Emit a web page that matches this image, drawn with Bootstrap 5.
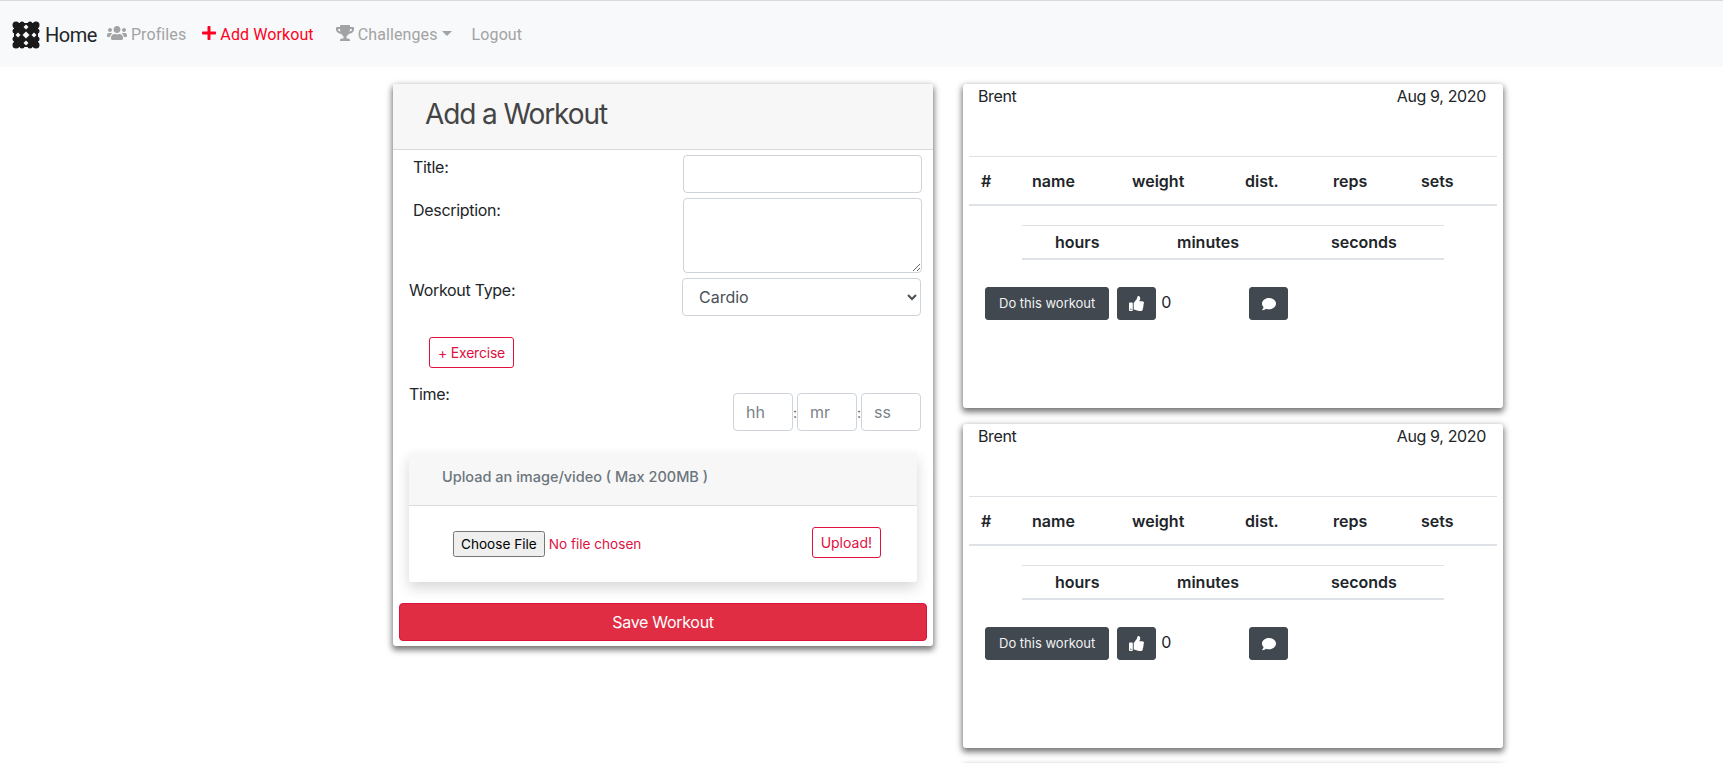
<!DOCTYPE html>
<html lang="en">
<head>
    <meta charset="UTF-8">
    <meta name="viewport" content="width=device-width, initial-scale=1.0">
    <title>Add a Workout</title>
    <link href="https://cdn.jsdelivr.net/npm/bootstrap@5.3.0/dist/css/bootstrap.min.css" rel="stylesheet">
    <style>
        html, body {
            height: 100%;
            overflow: hidden;
        }
        body {
            font-family: "Inter", "Roboto", sans-serif;
            font-size: 16px;
            color: #212529;
        }
        .top-bar {
            border-top: 1px solid #d8dadc;
            height: 67px;
            padding: 1px 0 0 12px;
            font-family: "Roboto", sans-serif;
            letter-spacing: .1px;
        }
        .top-bar .navbar-brand {
            font-size: 20px;
            padding: 0;
            margin-right: 0;
            gap: 5px;
            color: #212529;
            letter-spacing: -.5px;
        }
        .top-bar .nav-link {
            color: #a2a3a4;
        }
        .top-bar .nav-link svg {
            fill: currentColor;
            vertical-align: -1px;
        }
        .top-bar .nav-link.add-link {
            color: #ff0022;
        }
        .top-bar .dropdown-toggle::after {
            border-top-width: .34em;
            border-left-width: .34em;
            border-right-width: .34em;
            vertical-align: .2em;
        }
        .top-items {
            margin-left: 2px;
        }
        .item-add {
            margin-right: 6px;
        }
        .item-drop {
            margin-right: 4px;
        }
        .page-cols {
            padding-left: 393px;
            padding-top: 17px;
            gap: 30px;
        }
        .panel-box {
            width: 540px;
            background: #fff;
            box-shadow: 0 3px 6px 1px rgba(0, 0, 0, .55);
            border-radius: 3px;
        }
        .add-head {
            height: 66px;
            background: #f7f7f7;
            border-bottom: 1px solid #d9d9d9;
            padding: 0 0 4px 32px;
            display: flex;
            align-items: center;
        }
        .add-head h3 {
            font-size: 28px;
            font-weight: 400;
            color: #444;
            margin: 0;
            letter-spacing: -1.1px;
        }
        .add-body {
            padding: 5px 6px 5px;
        }
        .form-line {
            display: flex;
            justify-content: space-between;
            margin-bottom: 5px;
        }
        .form-line label {
            padding-left: 14px;
            letter-spacing: -.3px;
        }
        .form-line .form-control, .form-line .form-select {
            width: 239px;
            margin-right: 5px;
            border-color: #ced4da;
            border-radius: 4px;
        }
        .form-line .form-control::placeholder {
            color: #7b8289;
        }
        .form-line.shifted label {
            padding-left: 10px;
        }
        .form-line textarea.form-control {
            height: 75px;
        }
        .form-line .form-select {
            height: 38px;
            margin-right: 6px;
            padding-left: 12px;
            color: #495057;
            background-image: none;
            appearance: auto;
        }
        .ex-btn {
            margin: 16px 0 14px 30px;
            height: 31px;
            padding: 3px 8px;
            font-size: 14px;
            letter-spacing: -.2px;
            color: #e0103f;
            border-color: #e0103f;
            border-radius: 3px;
        }
        .time-boxes {
            display: flex;
            align-items: center;
            margin: 11px 6px 0 0;
            color: #555;
        }
        .form-line .time-boxes .form-control {
            width: 60px;
            margin: 0;
            padding-left: 12px;
        }
        .time-sep {
            width: 4px;
            text-align: center;
            font-size: 14px;
        }
        .upload-box {
            margin: 22px 10px 21px 10px;
            border-radius: 3px;
            box-shadow: 0 6px 14px rgba(0, 0, 0, .16);
        }
        .upload-head {
            height: 53px;
            background: #f7f7f7;
            border-bottom: 1px solid #dcdcdc;
            padding: 0 0 5px 33px;
            display: flex;
            align-items: center;
            color: #6c757d;
            font-size: 14.5px;
            font-weight: 500;
        }
        .upload-main {
            height: 76px;
            padding: 21px 36px 0 44px;
            display: flex;
            justify-content: space-between;
            align-items: flex-start;
        }
        .file-pick {
            margin-top: 4px;
            font-family: "Inter", sans-serif;
            font-size: 13.6px;
            color: #e0103f;
            width: 200px;
        }
        .up-btn {
            height: 31px;
            padding: 3px 8px;
            font-size: 14px;
            color: #e0103f;
            border-color: #e0103f;
            border-radius: 3px;
        }
        .save-btn {
            height: 38px;
            font-size: 16px;
            letter-spacing: -.3px;
            background: #e02d43;
            border-color: #dc143c;
            border-radius: 4px;
        }
        .feed-col {
            display: flex;
            flex-direction: column;
            gap: 16px;
        }
        .post-box {
            height: 324px;
            padding: 0 6px;
            flex: none;
        }
        .post-top {
            display: flex;
            justify-content: space-between;
            padding: 0 11px 0 9px;
            height: 72px;
            letter-spacing: -.35px;
        }
        .post-table {
            table-layout: fixed;
            margin-bottom: 0;
            font-size: 16px;
        }
        .post-table th {
            padding: 12px 12px 11px;
            border-top: 1px solid #dee2e6;
            border-bottom: 2px solid #dee2e6;
            font-weight: 600;
        }
        .post-table th:nth-child(1) { width: 51px; }
        .post-table th:nth-child(2) { width: 100px; }
        .post-table th:nth-child(3) { width: 113px; }
        .time-table {
            width: 422px;
            margin: 19px 0 0 53px;
            table-layout: fixed;
            font-size: 16px;
        }
        .time-table th {
            padding: 4px 12px;
            border-top: 1px solid #dee2e6;
            border-bottom: 2px solid #dee2e6;
            font-weight: 600;
        }
        .time-table th:nth-child(1) { width: 143px; padding-left: 33px; }
        .time-table th:nth-child(2) { width: 154px; }
        .post-actions {
            display: flex;
            align-items: center;
            margin: 27px 0 0 16px;
            font-size: 16px;
        }
        .post-actions .btn {
            height: 33px;
            font-size: 13px;
            padding: 0 13px;
            background: #41484f;
            border-color: #41484f;
            border-radius: 3px;
            color: #f1f2f3;
            display: flex;
            align-items: center;
            justify-content: center;
        }
        .post-actions svg {
            fill: #fff;
            flex: none;
        }
        .post-actions .act-icon {
            width: 39px;
            padding: 0;
        }
        .post-actions .act-like {
            margin-left: 8px;
        }
        .like-num {
            width: 93px;
            padding-left: 5px;
            margin-top: -4px;
        }
    </style>
</head>
<body>
    <nav class="navbar navbar-expand navbar-light bg-light top-bar">
        <a class="navbar-brand d-flex align-items-center" href="#">
            <svg width="28" height="28" viewBox="0 0 28 28">
                <g fill="#1a1a1a">
                    <rect x="2" y="2" width="24" height="24" rx="3"/>
                    <circle cx="4" cy="4" r="3.500"/><circle cx="10" cy="3" r="2.500"/><circle cx="18" cy="3" r="2.500"/><circle cx="24" cy="4" r="3.500"/>
                    <circle cx="3" cy="10" r="2.500"/><circle cx="25" cy="10" r="2.500"/>
                    <circle cx="3" cy="18" r="2.500"/><circle cx="25" cy="18" r="2.500"/>
                    <circle cx="4" cy="24" r="3.500"/><circle cx="10" cy="25" r="2.500"/><circle cx="18" cy="25" r="2.500"/><circle cx="24" cy="24" r="3.500"/>
                </g>
                <g fill="#f8f9fa">
                    <path d="M14 10.500l3.500 3.500-3.500 3.500-3.500-3.500z"/>
                    <path d="M14 3.500l2.500 2.500-2.500 2.500-2.500-2.500z"/>
                    <path d="M14 19.500l2.500 2.500-2.500 2.500-2.500-2.500z"/>
                    <path d="M3.500 14l2.500-2.500 2.500 2.500-2.500 2.500z"/>
                    <path d="M19.500 14l2.500-2.500 2.500 2.500-2.500 2.500z"/>
                </g>
            </svg>
            Home
        </a>
        <ul class="navbar-nav top-items align-items-center">
            <li class="nav-item">
                <a class="nav-link" href="#">
                    <svg width="20" height="16" viewBox="0 0 640 512"><path d="M96 224c35.300 0 64-28.700 64-64s-28.700-64-64-64-64 28.700-64 64 28.700 64 64 64zm448 0c35.300 0 64-28.700 64-64s-28.700-64-64-64-64 28.700-64 64 28.700 64 64 64zm32 32h-64c-17.600 0-33.500 7.100-45.100 18.600 40.300 22.100 68.900 62 75.100 109.400h66c17.700 0 32-14.300 32-32v-32c0-35.300-28.700-64-64-64zm-256 0c61.900 0 112-50.100 112-112S381.900 32 320 32 208 82.100 208 144s50.100 112 112 112zm76.800 32h-8.300c-20.800 10-43.900 16-68.500 16s-47.600-6-68.500-16h-8.300C179.600 288 128 339.600 128 403.200V432c0 26.500 21.500 48 48 48h288c26.500 0 48-21.500 48-48v-28.800c0-63.600-51.600-115.200-115.200-115.200zm-223.700-13.400C161.500 263.100 145.600 256 128 256H64c-35.300 0-64 28.700-64 64v32c0 17.700 14.300 32 32 32h65.900c6.300-47.400 34.900-87.300 75.200-109.400z"/></svg>
                    Profiles
                </a>
            </li>
            <li class="nav-item item-add">
                <a class="nav-link add-link" href="#">
                    <svg width="14" height="16" viewBox="0 0 448 512"><path d="M416 208H272V64c0-17.670-14.330-32-32-32h-32c-17.670 0-32 14.330-32 32v144H32c-17.670 0-32 14.330-32 32v32c0 17.670 14.330 32 32 32h144v144c0 17.670 14.330 32 32 32h32c17.670 0 32-14.330 32-32V304h144c17.670 0 32-14.330 32-32v-32c0-17.670-14.330-32-32-32z"/></svg>
                    Add Workout
                </a>
            </li>
            <li class="nav-item dropdown item-drop">
                <a class="nav-link dropdown-toggle" href="#" role="button" data-bs-toggle="dropdown" aria-expanded="false">
                    <svg width="18" height="16" viewBox="0 0 576 512"><path d="M552 64H448V24c0-13.300-10.700-24-24-24H152c-13.300 0-24 10.700-24 24v40H24C10.700 64 0 74.700 0 88v56c0 35.700 22.500 72.400 61.900 100.700 31.500 22.700 69.800 37.100 110 41.700C203.300 338.500 240 360 240 360v72h-48c-35.300 0-64 20.700-64 56v12c0 6.600 5.400 12 12 12h296c6.600 0 12-5.400 12-12v-12c0-35.300-28.700-56-64-56h-48v-72s36.700-21.500 68.100-73.600c40.300-4.600 78.600-19 110-41.700 39.300-28.300 61.900-65 61.900-100.700V88c0-13.300-10.700-24-24-24zM99.300 192.800C74.900 175.200 64 155.600 64 144v-16h64.200c1 32.600 5.800 61.200 12.800 86.200-15.100-5.200-29.200-12.400-41.700-21.400zM512 144c0 16.100-17.700 36.100-35.300 48.800-12.500 9-26.700 16.200-41.800 21.400 7-25 11.800-53.600 12.800-86.200H512v16z"/></svg>
                    Challenges</a>
            </li>
            <li class="nav-item">
                <a class="nav-link" href="#">Logout</a>
            </li>
        </ul>
    </nav>

    <div class="d-flex align-items-start page-cols">
        <!-- Add workout form -->
        <div class="panel-box">
            <div class="add-head"><h3>Add a Workout</h3></div>
            <form class="add-body">
                <div class="form-line">
                    <label for="workoutTitle">Title:</label>
                    <input type="text" class="form-control" id="workoutTitle">
                </div>
                <div class="form-line">
                    <label for="workoutDesc">Description:</label>
                    <textarea class="form-control" id="workoutDesc"></textarea>
                </div>
                <div class="form-line shifted">
                    <label for="workoutType">Workout Type:</label>
                    <select class="form-select" id="workoutType">
                        <option>Cardio</option>
                        <option>Strength</option>
                    </select>
                </div>
                <button type="button" class="btn btn-outline-danger ex-btn">+ Exercise</button>
                <div class="form-line shifted mb-0">
                    <label>Time:</label>
                    <div class="time-boxes">
                        <input type="text" class="form-control" placeholder="hh">
                        <span class="time-sep">:</span>
                        <input type="text" class="form-control" placeholder="mr">
                        <span class="time-sep">:</span>
                        <input type="text" class="form-control" placeholder="ss">
                    </div>
                </div>
                <div class="upload-box">
                    <div class="upload-head">Upload an image/video ( Max 200MB )</div>
                    <div class="upload-main">
                        <input type="file" class="file-pick">
                        <button type="button" class="btn btn-outline-danger up-btn">Upload!</button>
                    </div>
                </div>
                <button type="button" class="btn btn-danger w-100 save-btn">Save Workout</button>
            </form>
        </div>

        <!-- Feed -->
        <div class="feed-col">
            <div class="panel-box post-box">
                <div class="post-top"><span>Brent</span><span>Aug 9, 2020</span></div>
                <table class="post-table w-100">
                    <thead><tr><th>#</th><th>name</th><th>weight</th><th>dist.</th><th>reps</th><th>sets</th></tr></thead>
                </table>
                <table class="time-table">
                    <thead><tr><th>hours</th><th>minutes</th><th>seconds</th></tr></thead>
                </table>
                <div class="post-actions">
                    <button type="button" class="btn">Do this workout</button>
                    <button type="button" class="btn act-icon act-like">
                        <svg width="15" height="15" viewBox="0 0 512 512"><path d="M104 224H24c-13.255 0-24 10.745-24 24v240c0 13.255 10.745 24 24 24h80c13.255 0 24-10.745 24-24V248c0-13.255-10.745-24-24-24zM64 472c-13.255 0-24-10.745-24-24s10.745-24 24-24 24 10.745 24 24-10.745 24-24 24zM384 81.452c0 42.416-25.970 66.208-33.277 94.548h101.723c33.397 0 59.397 27.746 59.553 58.098.084 17.938-7.546 37.249-19.439 49.197l-.11.11c9.836 23.337 8.237 56.037-9.308 79.469 8.681 25.895-.069 57.704-16.382 74.757 4.298 17.598 2.244 32.575-6.148 44.632C440.202 511.587 389.616 512 346.839 512l-2.845-.001c-48.287-.017-87.806-17.598-119.560-31.725-15.957-7.099-36.821-15.887-52.651-16.178-6.540-.12-11.783-5.457-11.783-11.998v-213.770c0-3.200 1.282-6.271 3.558-8.521 39.614-39.144 56.648-80.587 89.117-113.111 14.804-14.832 20.188-37.236 25.393-58.902C282.515 39.293 291.817 0 312 0c24 0 72 8 72 81.452z"/></svg>
                    </button>
                    <span class="like-num">0</span>
                    <button type="button" class="btn act-icon">
                        <svg width="14" height="14" viewBox="0 0 512 512"><path d="M256 32C114.600 32 0 125.100 0 240c0 49.600 21.400 95 57 130.700C44.500 421.100 2.700 466 2.200 466.500c-2.200 2.300-2.800 5.700-1.500 8.700S4.800 480 8 480c66.300 0 116-31.800 140.600-51.400 32.700 12.300 69 19.400 107.400 19.400 141.400 0 256-93.100 256-208S397.400 32 256 32z"/></svg>
                    </button>
                </div>
            </div>
            <div class="panel-box post-box">
                <div class="post-top"><span>Brent</span><span>Aug 9, 2020</span></div>
                <table class="post-table w-100">
                    <thead><tr><th>#</th><th>name</th><th>weight</th><th>dist.</th><th>reps</th><th>sets</th></tr></thead>
                </table>
                <table class="time-table">
                    <thead><tr><th>hours</th><th>minutes</th><th>seconds</th></tr></thead>
                </table>
                <div class="post-actions">
                    <button type="button" class="btn">Do this workout</button>
                    <button type="button" class="btn act-icon act-like">
                        <svg width="15" height="15" viewBox="0 0 512 512"><path d="M104 224H24c-13.255 0-24 10.745-24 24v240c0 13.255 10.745 24 24 24h80c13.255 0 24-10.745 24-24V248c0-13.255-10.745-24-24-24zM64 472c-13.255 0-24-10.745-24-24s10.745-24 24-24 24 10.745 24 24-10.745 24-24 24zM384 81.452c0 42.416-25.970 66.208-33.277 94.548h101.723c33.397 0 59.397 27.746 59.553 58.098.084 17.938-7.546 37.249-19.439 49.197l-.11.11c9.836 23.337 8.237 56.037-9.308 79.469 8.681 25.895-.069 57.704-16.382 74.757 4.298 17.598 2.244 32.575-6.148 44.632C440.202 511.587 389.616 512 346.839 512l-2.845-.001c-48.287-.017-87.806-17.598-119.560-31.725-15.957-7.099-36.821-15.887-52.651-16.178-6.540-.12-11.783-5.457-11.783-11.998v-213.770c0-3.200 1.282-6.271 3.558-8.521 39.614-39.144 56.648-80.587 89.117-113.111 14.804-14.832 20.188-37.236 25.393-58.902C282.515 39.293 291.817 0 312 0c24 0 72 8 72 81.452z"/></svg>
                    </button>
                    <span class="like-num">0</span>
                    <button type="button" class="btn act-icon">
                        <svg width="14" height="14" viewBox="0 0 512 512"><path d="M256 32C114.600 32 0 125.100 0 240c0 49.600 21.400 95 57 130.700C44.500 421.100 2.700 466 2.200 466.500c-2.200 2.300-2.800 5.700-1.500 8.700S4.800 480 8 480c66.300 0 116-31.800 140.600-51.400 32.700 12.300 69 19.400 107.400 19.400 141.400 0 256-93.100 256-208S397.400 32 256 32z"/></svg>
                    </button>
                </div>
            </div>
            <div class="panel-box post-box"></div>
        </div>
    </div>
    <script src="https://cdn.jsdelivr.net/npm/bootstrap@5.3.0/dist/js/bootstrap.bundle.min.js"></script>
</body>
</html>
